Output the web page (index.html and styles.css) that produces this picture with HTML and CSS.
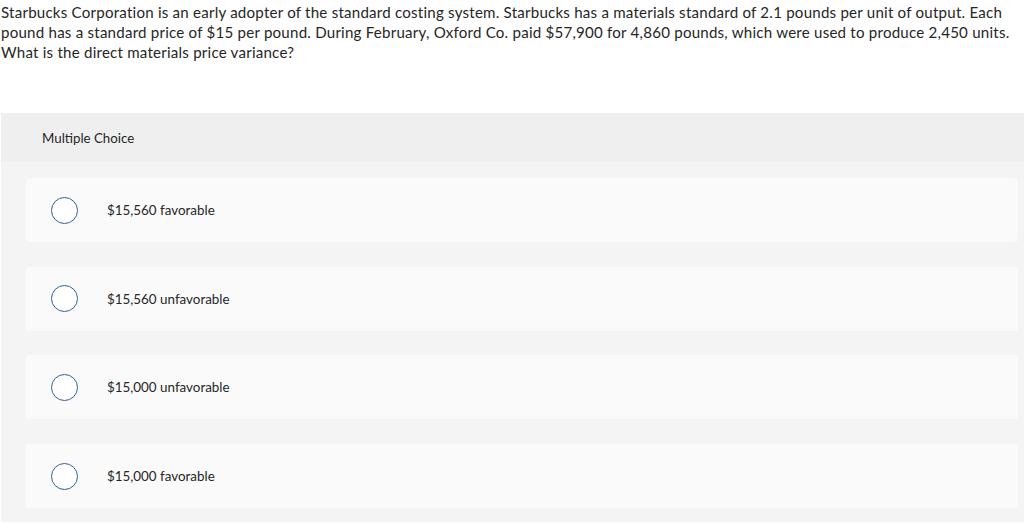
FILE: index.html
```html
<!DOCTYPE html>
<html>
<head>
<meta charset="utf-8">
<link rel="stylesheet" href="styles.css">
</head>
<body>
<div class="page">
  <p class="question">Starbucks Corporation is an early adopter of the standard costing system. Starbucks has a materials standard of 2.1 pounds per unit of output. Each pound has a standard price of $15 per pound. During February, Oxford Co. paid $57,900 for 4,860 pounds, which were used to produce 2,450 units. What is the direct materials price variance?</p>
  <section class="mc">
    <div class="mc-header">Multiple Choice</div>
    <div class="mc-body">
      <label class="option"><span class="radio"></span><span class="opt-text">$15,560 favorable</span></label>
      <label class="option"><span class="radio"></span><span class="opt-text">$15,560 unfavorable</span></label>
      <label class="option"><span class="radio"></span><span class="opt-text">$15,000 unfavorable</span></label>
      <label class="option"><span class="radio"></span><span class="opt-text">$15,000 favorable</span></label>
    </div>
  </section>
</div>
</body>
</html>
```

FILE: styles.css
```css
html, body {
  margin: 0;
  padding: 0;
  background: #ffffff;
}
body {
  font-family: Lato, "Open Sans", Arial, sans-serif;
  color: #262626;
}
.page {
  padding: 0 0 0 1px;
}
.question {
  margin: 0;
  padding-top: 2px;
  font-size: 15.1px;
  letter-spacing: 0.22px;
  line-height: 20px;
  width: 1020px;
}
.mc {
  margin-top: 51px;
  background: #f4f4f4;
}
.mc-header {
  background: #efefef;
  height: 49px;
  box-sizing: border-box;
  padding-left: 41px;
  display: flex;
  align-items: center;
  font-size: 13.3px;
}
.mc-body {
  display: flex;
  flex-direction: column;
  gap: 24.7px;
  padding: 16px 6px 14px 25px;
}
.option {
  height: 64px;
  background: #fafafa;
  border-radius: 3px;
  display: flex;
  align-items: center;
}
.radio {
  width: 25px;
  height: 25px;
  border: 1.5px solid #2f5f98;
  border-radius: 50%;
  margin-left: 25px;
  background: #fff;
  flex: none;
}
.opt-text {
  margin-left: 29px;
  font-size: 13.4px;
}
```
